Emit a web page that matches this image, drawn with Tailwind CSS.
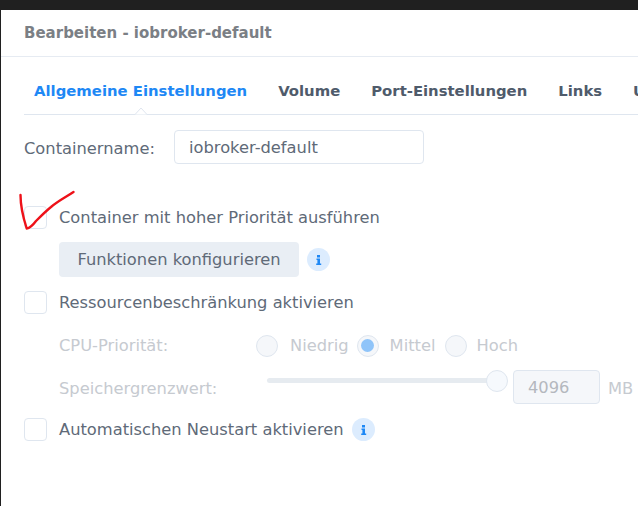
<!DOCTYPE html>
<html lang="de">
  <head>
    <meta charset="UTF-8" />
    <title>Bearbeiten - iobroker-default</title>
    <script src="https://cdn.jsdelivr.net/npm/@tailwindcss/browser@4"></script>
  </head>
  <body class="bg-[#202020] overflow-hidden">
    <div class="relative w-[638px] h-[506px] pt-[10px] pl-[1px] overflow-hidden [font-family:'DejaVu_Sans',sans-serif] text-[16.3px] text-[#606a78]">
      <div class="bg-white h-[496px] w-[637px] overflow-hidden">
        <!-- Header -->
        <div class="h-[47px] pl-[23px] flex items-center border-b border-[#e6ebf2] text-[15px] font-bold text-[#7b7f85]">Bearbeiten - iobroker-default</div>

        <!-- Tabs -->
        <div class="relative ml-[23px] h-[58px] pt-[11px] border-b border-[#dfe6ef] flex items-center pl-[10px] gap-[31px] whitespace-nowrap text-[14.85px] font-bold text-[#4f5b6b]">
          <span class="text-[#1e88f5]">Allgemeine Einstellungen</span>
          <span>Volume</span>
          <span>Port-Einstellungen</span>
          <span>Links</span>
          <span>U</span>
          <svg class="absolute left-[110px] bottom-[-1px]" width="14" height="8" viewBox="0 0 14 8"><path d="M0 7.5 H1 L7 1 L13 7.5 H14" fill="#fff" stroke="#dfe6ef"/></svg>
        </div>

        <!-- Form -->
        <div class="pl-[23px]">
          <div class="flex items-center mt-[15px] h-[35px]">
            <span class="w-[150px] pt-[3px]">Containername:</span>
            <div class="w-[250px] h-[34px] border border-[#dfe6ef] rounded-[4px] pl-[14px] pt-[3px] flex items-center self-start">iobroker-default</div>
          </div>

          <div class="flex items-center mt-[41px] h-[23px]">
            <span class="w-[23px] h-[23px] border border-[#dfe6ef] rounded-[4px]"></span>
            <span class="ml-[12px] pt-[2px]">Container mit hoher Priorität ausführen</span>
          </div>

          <div class="flex items-center mt-[13px] ml-[35px]">
            <button class="w-[240px] h-[35px] pt-[2px] bg-[#e9eef4] rounded-[4px] text-[#606a78]">Funktionen konfigurieren</button>
            <svg class="ml-[8px]" width="23" height="23" viewBox="0 0 23 23"><circle cx="11.5" cy="11.5" r="11.5" fill="#dcecfe"/><path d="M10 7h3v2.4h-3zM9.5 10.5h3.5v5h1.2v1.6H9.2v-1.6h1.2v-3.4H9.5z" fill="#1e88f5"/></svg>
          </div>

          <div class="flex items-center mt-[14px] h-[23px]">
            <span class="w-[23px] h-[23px] border border-[#dfe6ef] rounded-[4px]"></span>
            <span class="ml-[12px] pt-[2px]">Ressourcenbeschränkung aktivieren</span>
          </div>

          <!-- Disabled resource options -->
          <div class="flex items-center mt-[20px] ml-[35px] h-[23px] text-[#c6cad0]">
            <span class="w-[197px] pt-[2px]">CPU-Priorität:</span>
            <span class="w-[22px] h-[22px] rounded-full border border-[#dfe6ef] bg-[#f5f7fa]"></span>
            <span class="ml-[12px] pt-[2px]">Niedrig</span>
            <span class="ml-[8px] w-[22px] h-[22px] rounded-full border border-[#dfe6ef] bg-[#f5f7fa] flex items-center justify-center"><span class="w-[13px] h-[13px] rounded-full bg-[#8fc4f9]"></span></span>
            <span class="ml-[11px] pt-[2px]">Mittel</span>
            <span class="ml-[9px] w-[22px] h-[22px] rounded-full border border-[#dfe6ef] bg-[#f5f7fa]"></span>
            <span class="ml-[10px] pt-[2px]">Hoch</span>
          </div>

          <div class="flex items-center mt-[13px] ml-[35px] h-[35px] text-[#c6cad0]">
            <span class="w-[208px] pt-[3px]">Speichergrenzwert:</span>
            <div class="relative w-[246px] h-[35px]">
              <div class="absolute left-0 top-[8px] w-[225px] h-[5px] rounded-full bg-[#e6ebf0]"></div>
              <div class="absolute left-[219px] top-0 w-[22px] h-[22px] rounded-full border border-[#dfe6ef] bg-[#f6f9fd]"></div>
            </div>
            <div class="w-[87px] h-[34px] pt-[3px] self-start border border-[#dfe6ef] rounded-[4px] bg-[#f5f7fa] pl-[14px] flex items-center text-[#b4b8be]">4096</div>
            <span class="ml-[8px] pt-[3px]">MB</span>
          </div>

          <div class="flex items-center mt-[13px] h-[23px]">
            <span class="w-[23px] h-[23px] border border-[#dfe6ef] rounded-[4px]"></span>
            <span class="ml-[12px] pt-[2px]">Automatischen Neustart aktivieren</span>
            <svg class="ml-[8px]" width="23" height="23" viewBox="0 0 23 23"><circle cx="11.5" cy="11.5" r="11.5" fill="#dcecfe"/><path d="M10 7h3v2.4h-3zM9.5 10.5h3.5v5h1.2v1.6H9.2v-1.6h1.2v-3.4H9.5z" fill="#1e88f5"/></svg>
          </div>
        </div>
      </div>

      <!-- Red hand-drawn check -->
      <svg class="absolute left-0 top-0" width="100" height="240" viewBox="0 0 100 240" fill="none"><path d="M20.5 195 C20.5 205 23 217 26.7 228.5 C30 228 33 225 36 221 C42 215 46 211 51 207 C58 201 66 197 73.5 192" stroke="#ee1119" stroke-width="2.4" stroke-linecap="round" stroke-linejoin="round"/></svg>
    </div>
  </body>
</html>
